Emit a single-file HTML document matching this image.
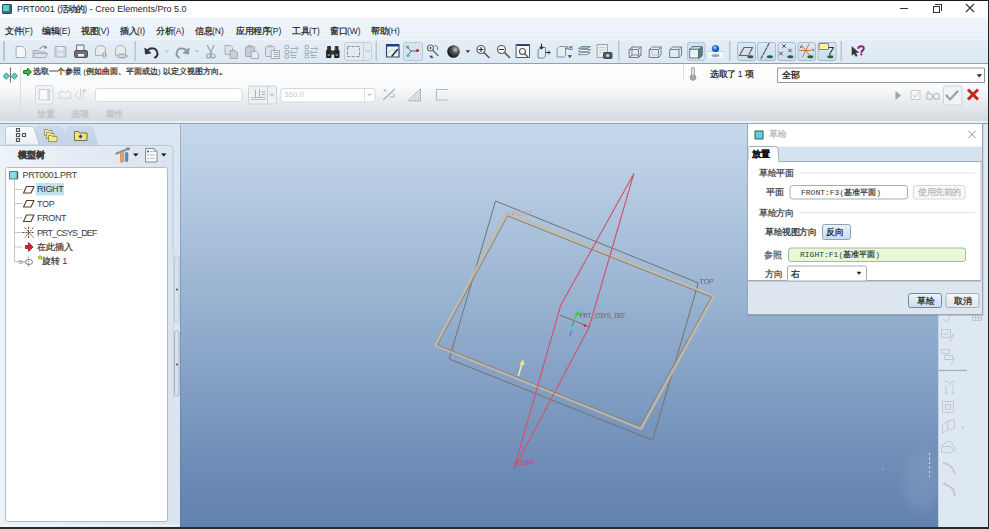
<!DOCTYPE html>
<html><head><meta charset="utf-8">
<style>
*{box-sizing:border-box;}
html,body{margin:0;padding:0;}
body{width:989px;height:529px;position:relative;overflow:hidden;background:#fff;font-family:"Liberation Sans",sans-serif;color:#222;}
.a{position:absolute;}
.t{position:absolute;white-space:nowrap;line-height:1;}
.ttl .z{width:8px !important;}
.z{display:inline-block;width:1em;font-style:normal;font-family:"Liberation Sans",sans-serif;text-align:center;letter-spacing:0;-webkit-text-stroke:0.25px currentColor;}
</style></head><body>

<!-- top border -->
<div class="a" style="left:0;top:0;width:989px;height:1px;background:#1a1a1a"></div>
<!-- title bar -->
<div class="a" style="left:0;top:1px;width:989px;height:16px;background:#ffffff"></div>
<div class="a" style="left:2px;top:4px;width:10px;height:10px;background:#4fd0d4;border:1px solid #3a4a52;border-radius:1px;box-shadow:inset -2px -2px 0 #3b6e74"></div>
<div class="t ttl" style="left:17px;top:5px;font-size:9px;color:#1e1e1e">PRT0001 (<i class="z">活</i><i class="z">动</i><i class="z">的</i>) - Creo Elements/Pro 5.0</div>
<!-- window controls -->
<div class="a" style="left:900px;top:8px;width:8px;height:1px;background:#333"></div>
<div class="a" style="left:933px;top:6px;width:7px;height:7px;border:1px solid #333"></div>
<div class="a" style="left:935px;top:4px;width:7px;height:7px;border-top:1px solid #333;border-right:1px solid #333"></div>
<svg class="a" style="left:965px;top:3px" width="10" height="10"><path d="M1 1L9 9M9 1L1 9" stroke="#333" stroke-width="1.1"/></svg>

<!-- menu bar -->
<div class="a" style="left:0;top:17px;width:989px;height:22px;background:linear-gradient(#f1f6fc,#e9f1f9)"></div>
<div id="menu" style="font-size:8.5px;color:#1e1e1e">
<div class="t" style="left:5px;top:27px"><i class="z">文</i><i class="z">件</i>(F)</div>
<div class="t" style="left:42px;top:27px"><i class="z">编</i><i class="z">辑</i>(E)</div>
<div class="t" style="left:81px;top:27px"><i class="z">视</i><i class="z">图</i>(V)</div>
<div class="t" style="left:120px;top:27px"><i class="z">插</i><i class="z">入</i>(I)</div>
<div class="t" style="left:156px;top:27px"><i class="z">分</i><i class="z">析</i>(A)</div>
<div class="t" style="left:195px;top:27px"><i class="z">信</i><i class="z">息</i>(N)</div>
<div class="t" style="left:236px;top:27px"><i class="z">应</i><i class="z">用</i><i class="z">程</i><i class="z">序</i>(P)</div>
<div class="t" style="left:292px;top:27px"><i class="z">工</i><i class="z">具</i>(T)</div>
<div class="t" style="left:330px;top:27px"><i class="z">窗</i><i class="z">口</i>(W)</div>
<div class="t" style="left:371px;top:27px"><i class="z">帮</i><i class="z">助</i>(H)</div>
</div>

<!-- toolbar -->
<div class="a" style="left:0;top:39px;width:988px;height:25px;background:linear-gradient(#e6eef7,#dce8f2);border-top:1px solid #f2f6fa;border-bottom:1.5px solid #90a0ac"></div>
<svg class="a" style="left:0;top:0" width="989" height="64" viewBox="0 0 989 64">
<g fill="none" stroke-linecap="round" stroke-linejoin="round">
<!-- separators -->
<rect x="3" y="41" width="2" height="20" fill="#b9c5d1" stroke="none"/>
<rect x="134.5" y="41" width="1.5" height="20" fill="#b9c5d1" stroke="none"/>
<rect x="375.5" y="41" width="1.5" height="20" fill="#b9c5d1" stroke="none"/>
<rect x="618" y="41" width="1.5" height="20" fill="#b9c5d1" stroke="none"/>
<rect x="729" y="41" width="1.5" height="20" fill="#b9c5d1" stroke="none"/>
<rect x="840.5" y="41" width="1.5" height="20" fill="#b9c5d1" stroke="none"/>
<!-- new -->
<path d="M16.5 46.5h6l3 3v8h-9z" fill="#f4f6f8" stroke="#a8b0b8"/>
<!-- open -->
<path d="M33.5 50.5h5l1 1.5h6v5.5h-12z" fill="#c9d0d6" stroke="#a7afb7"/>
<path d="M35 53.5h12.5l-2 4h-12z" fill="#dde2e6" stroke="#a7afb7"/>
<path d="M40 49c1-2.5 4-3.5 6-2" stroke="#9aa3ab" stroke-width="1.3"/>
<circle cx="45.5" cy="47.5" r="1.2" fill="#7d868e" stroke="none"/>
<!-- save -->
<rect x="55" y="46.5" width="11" height="10.5" rx="1" fill="#cdd3d8" stroke="#aab2ba"/>
<rect x="57.5" y="47" width="6" height="3.5" fill="#eef1f4" stroke="none"/>
<rect x="57.5" y="52.5" width="6" height="4" fill="#e2e6ea" stroke="none"/>
<!-- print -->
<rect x="77" y="45" width="7" height="6" fill="#f2f2f2" stroke="#676b6f"/>
<rect x="74.5" y="50.5" width="13" height="7" rx="1.5" fill="#6d7175" stroke="#4f5357"/>
<rect x="78" y="54" width="6" height="2.5" fill="#f5f5f5" stroke="none"/>
<rect x="76" y="54" width="1.5" height="1.5" fill="#d03a2a" stroke="none"/>
<!-- 2 gray -->
<path d="M95.5 55v-5c0-3 2-4.5 5-4.5s5 1.5 5 4.5v5z" fill="#e8ecef" stroke="#a8b0b8"/>
<ellipse cx="104.5" cy="55" rx="1.6" ry="2.8" fill="#d5dadf" stroke="#9aa2aa"/>
<path d="M115.5 55v-5c0-3 2-4.5 5-4.5s5 1.5 5 4.5v5z" fill="#e8ecef" stroke="#a8b0b8"/>
<ellipse cx="122" cy="56" rx="5" ry="2" fill="#cfd4d9" stroke="#9aa2aa"/>
<!-- undo -->
<path d="M147.5 50.5c3-3 8-3 9.5 1s-1 5.5-2 6" stroke="#2f3337" stroke-width="2"/>
<path d="M145 48.5l0.5 5.5 5-1z" fill="#2f3337" stroke="#2f3337"/>
<path d="M165 50.5l2 2 2-2z" fill="#b0b8c0" stroke="none"/>
<!-- redo -->
<path d="M186.5 50.5c-3-3-8-3-9.5 1s1 5.5 2 6" stroke="#8f979f" stroke-width="1.8"/>
<path d="M189 48.5l-0.5 5.5-5-1z" fill="#8f979f" stroke="#8f979f"/>
<path d="M195 50.5l2 2 2-2z" fill="#b0b8c0" stroke="none"/>
<!-- cut -->
<path d="M207.5 45.5l4 8M214 45.5l-4 8" stroke="#9aa2aa" stroke-width="1.2"/>
<circle cx="208.5" cy="56" r="2" stroke="#9aa2aa" stroke-width="1.2"/>
<circle cx="213" cy="56" r="2" stroke="#9aa2aa" stroke-width="1.2"/>
<!-- copy -->
<path d="M225.5 45.5h5l2 2v7h-7z" fill="#dfe3e7" stroke="#a4acb4"/>
<path d="M230.5 50.5h5l2 2v6h-7z" fill="#c9ced3" stroke="#a4acb4"/>
<!-- paste -->
<rect x="245.5" y="46.5" width="9" height="10" rx="1" fill="#c6ccd2" stroke="#a4acb4"/>
<rect x="248" y="45" width="4" height="2.5" fill="#b0b7be" stroke="none"/>
<path d="M251.5 51.5h5l2 2v5h-7z" fill="#e8ebee" stroke="#a4acb4"/>
<!-- paste special -->
<rect x="265.5" y="46.5" width="9" height="10" rx="1" fill="#dfe3e7" stroke="#a4acb4"/>
<rect x="268" y="45" width="4" height="2.5" fill="#b8bfc6" stroke="none"/>
<rect x="271.5" y="50.5" width="8" height="8" fill="#eceff2" stroke="#a4acb4"/>
<path d="M274 52.5h4M274 54.5h4M274 56.5h4" stroke="#a4acb4"/>
<!-- tree arrows x2 -->
<g stroke="#a6aeb6"><rect x="285.5" y="45.5" width="3" height="3"/><rect x="285.5" y="50.5" width="3" height="3"/><rect x="285.5" y="55" width="3" height="3"/><path d="M291 48.5h6M296 46.5l2 2-2 2M291 52.5h6M292 50.5l-2 2 2 2M291 55.5h5M291 57.5h5"/></g>
<g stroke="#a6aeb6"><rect x="305.5" y="45.5" width="3" height="3"/><rect x="305.5" y="50.5" width="3" height="3"/><rect x="305.5" y="55" width="3" height="3"/><path d="M311 48.5h6M316 46.5l2 2-2 2M311 52.5h6M312 50.5l-2 2 2 2M311 55.5h5M311 57.5h5"/></g>
<!-- binoculars -->
<path d="M327 50.5h4v7h-4zM335 50.5h4v7h-4z" fill="#222" stroke="#222"/>
<path d="M328 46.5h2.5v4h-2.5zM335.5 46.5h2.5v4h-2.5zM331 51h4v3h-4z" fill="#333" stroke="#333"/>
<path d="M328 55h1.5M336 55h1.5" stroke="#ddd"/>
<!-- select box button -->
<rect x="344.5" y="42.5" width="27" height="18" rx="2" fill="#e2eaf2" stroke="#c3ced9"/>
<path d="M363.5 43v17" stroke="#c3ced9"/>
<rect x="347.5" y="46.5" width="12" height="10" stroke="#8f979f" stroke-dasharray="2.5 2"/>
<path d="M366 50.5l1.5 1.5 1.5-1.5" stroke="#a0a8b0"/>
<!-- sketch view icon -->
<rect x="386.5" y="44.5" width="12.5" height="12.5" fill="#eef2f6" stroke="#33466e" stroke-width="1.2"/>
<rect x="386.5" y="44.5" width="12.5" height="2" fill="#1e3a88" stroke="none"/>
<path d="M388.5 52.5l3.5-3.5 2.5 1.5" stroke="#c0ccd4"/>
<path d="M397.5 49.5l-5.5 6.5" stroke="#26323e" stroke-width="1.6"/>
<!-- active spin center button -->
<rect x="403.5" y="42.5" width="19" height="18" rx="2" fill="#d4e4f2" stroke="#b4c8da"/>
<path d="M407.5 47.5l3.5 3.5l-3 4.5M411 51h6" stroke="#5b6b70"/>
<circle cx="407.5" cy="47" r="1.6" fill="#3cbf4a" stroke="none"/>
<circle cx="417.5" cy="50.5" r="1.6" fill="#c0202a" stroke="none"/>
<circle cx="408" cy="55.5" r="1.6" fill="#3ac4c4" stroke="none"/>
<!-- spin icon -->
<circle cx="430.5" cy="48" r="3" stroke="#6b7378" stroke-width="1.2"/>
<circle cx="430.5" cy="48" r="0.9" fill="#333" stroke="none"/>
<path d="M433 50.5l5 5" stroke="#6b7378" stroke-width="1.5"/>
<path d="M435 45.5c2 0 3.5 2 2.5 4M430 56c0 1.5 1.5 2.5 3 1.5" stroke="#4a5a8a"/>
<circle cx="431.5" cy="56.5" r="1.1" fill="#1d3a9a" stroke="none"/>
<!-- sphere -->
<defs><radialGradient id="sph" cx="0.65" cy="0.35" r="0.7"><stop offset="0" stop-color="#bfc3c7"/><stop offset="0.45" stop-color="#4c5054"/><stop offset="1" stop-color="#0f1113"/></radialGradient>
<radialGradient id="bsph" cx="0.4" cy="0.35" r="0.7"><stop offset="0" stop-color="#9fd0ff"/><stop offset="0.5" stop-color="#1e6fe0"/><stop offset="1" stop-color="#0a3a9a"/></radialGradient></defs>
<circle cx="453.5" cy="51.5" r="6.3" fill="url(#sph)" stroke="none"/>
<path d="M466.5 50.5h3l-1.5 2z" fill="#333" stroke="#333" stroke-width="0.6"/>
<!-- zoom in -->
<circle cx="481" cy="49.5" r="4" fill="#f6f6f6" stroke="#555a5e" stroke-width="1.2"/>
<path d="M479 49.5h4M481 47.5v4" stroke="#333" stroke-width="1.2"/>
<path d="M484 52.5l5 5" stroke="#555a5e" stroke-width="1.6"/>
<!-- zoom out -->
<circle cx="501.5" cy="49.5" r="4" fill="#f6f6f6" stroke="#555a5e" stroke-width="1.2"/>
<path d="M499.5 49.5h4" stroke="#333" stroke-width="1.2"/>
<path d="M504.5 52.5l5 5" stroke="#555a5e" stroke-width="1.6"/>
<!-- refit -->
<rect x="516.5" y="44.5" width="13" height="13" fill="#f5f7f9" stroke="#4a5866"/>
<rect x="516.5" y="44.5" width="13" height="1.5" fill="#22397a" stroke="none"/>
<circle cx="522.5" cy="51.5" r="3" stroke="#555" stroke-width="1.1"/>
<path d="M524.5 53.5l3 3" stroke="#555" stroke-width="1.3"/>
<!-- datum box arrow -->
<path d="M538.5 49.5l3-2h4v9l-2 1.5h-5z" fill="#dcf2ee" stroke="#7c858c"/>
<path d="M541.5 44v4.5M540 47l1.5 2 1.5-2" stroke="#2a2a2a" stroke-width="1.1"/>
<path d="M546 52.5h4M548.5 51l1.5 1.5-1.5 1.5" stroke="#2a2a2a"/>
<!-- box AB -->
<path d="M557.5 48.5l2-2h6v9l-2 1.5h-6z" fill="#e2f2f0" stroke="#8c959c"/>
<text x="565.5" y="50" font-size="5.5" fill="#444" font-family="Liberation Sans">AB</text>
<path d="M568.5 55.5h3l-1.5 2z" fill="#333" stroke="#333" stroke-width="0.5"/>
<!-- layers -->
<path d="M578.5 48.5l3-2h9l-3 2z" fill="#6fdcd4" stroke="#7e8a90"/>
<path d="M578.5 51.5l3-2h9l-3 2zM578.5 54.5l3-2h9l-3 2z" fill="#eef0f2" stroke="#8a9298"/>
<!-- sheet camera -->
<rect x="597.5" y="44.5" width="10" height="13" fill="#eceff1" stroke="#9aa1a8"/>
<path d="M599.5 47.5h6M599.5 50h6M599.5 52.5h6" stroke="#c6ccd1"/>
<rect x="603.5" y="52.5" width="8.5" height="6" rx="1" fill="#55595d" stroke="#44484c"/>
<circle cx="607.7" cy="55.5" r="1.6" fill="#cfd3d6" stroke="none"/>
<!-- boxes -->
<g stroke="#777e84" fill="none">
<path d="M629.5 49.5l2.5-2.5h9v8l-2.5 2.5h-9zM629.5 49.5h9v8M638.5 49.5l2.5-2.5"/><path d="M632 47v8l-2.5 2.5M632 55h9" stroke-dasharray="1 1"/>
<path d="M649.5 49.5l2.5-2.5h9v8l-2.5 2.5h-9zM649.5 49.5h9v8M658.5 49.5l2.5-2.5"/><path d="M652 47v8h9" stroke="#c0c6cb"/>
<path d="M670 49.5l2.5-2.5h9v8l-2.5 2.5h-9zM670 49.5h9v8M679 49.5l2.5-2.5"/>
</g>
<!-- shaded active -->
<rect x="687.5" y="42.5" width="17.5" height="18" rx="2" fill="#d0e0ef" stroke="#b3c5d6"/>
<path d="M690 49l3-2.5h9v9l-3 2.5h-9z" fill="#e9f4f4" stroke="#6f7b80"/>
<path d="M690 49h9v9" stroke="#6f7b80"/><path d="M699 49l3-2.5v9l-3 2.5z" fill="#4a8a8a" stroke="#556"/>
<path d="M690 49l3-2.5h9l-3 2.5z" fill="#9ee6e0" stroke="#6f7b80"/>
<!-- blue pin -->
<rect x="708" y="52" width="15" height="6" fill="#f4f8fc" stroke="none"/>
<path d="M708 51.5h15" stroke="#c9d3dc"/>
<ellipse cx="715.5" cy="55.5" rx="4" ry="1.5" fill="#8fa4c0" stroke="none"/>
<circle cx="715.5" cy="48.5" r="3.6" fill="url(#bsph)" stroke="none"/>
<!-- datum buttons -->
<defs><linearGradient id="dbtn" x1="0" y1="0" x2="0" y2="1"><stop offset="0" stop-color="#dde9f5"/><stop offset="1" stop-color="#cadcee"/></linearGradient></defs>
<g fill="url(#dbtn)" stroke="#a9bccd">
<rect x="737.5" y="42.5" width="18" height="18" rx="2"/>
<rect x="757.5" y="42.5" width="18" height="18" rx="2"/>
<rect x="778" y="42.5" width="17.5" height="18" rx="2"/>
<rect x="798" y="42.5" width="17.5" height="18" rx="2"/>
<rect x="818" y="42.5" width="18" height="18" rx="2"/>
</g>
<g stroke="#d8ecec" stroke-width="0.8" fill="#1f5e48">
<ellipse cx="750.5" cy="56.8" rx="3.6" ry="2"/><ellipse cx="770" cy="56.8" rx="3.6" ry="2"/><ellipse cx="790.5" cy="56.8" rx="3.6" ry="2"/><ellipse cx="810.5" cy="56.8" rx="3.6" ry="2"/><ellipse cx="830.5" cy="56.8" rx="3.6" ry="2"/>
</g>
<path d="M748 55.5h-8.5l4.5-8h8.5l-3.5 7" stroke="#7a5a50" stroke-width="1.2"/>
<path d="M761 58.5l8-15" stroke="#6a5e5e" stroke-width="1.3" stroke-dasharray="3 1.6"/>
<path d="M782.5 44.5l3 3M785.5 44.5l-3 3M779.5 52l3 3M782.5 52l-3 3M788.5 49l3 3M791.5 49l-3 3" stroke="#5a4a48" stroke-width="1"/>
<path d="M801.5 45l8.5 11M809 44l-6.5 13M799.5 50.5h11" stroke="#c8743a" stroke-width="1"/>
<path d="M800 46l2 2M802 46l-2 2M812 49l2 2M814 49l-2 2" stroke="#6a6a80" stroke-width="0.8"/>
<rect x="819.5" y="43.5" width="9" height="6" fill="#f8f2a6" stroke="#8a8a70"/>
<path d="M829 47.5h4.5l-4 7" stroke="#333" stroke-width="1.1"/>
<!-- help -->
<path d="M852 47v8.3l2.1-1.9 1.8 3 1.3-.8-1.8-3 2.9-.2z" fill="#2a3036" stroke="#2a3036" stroke-width="0.6"/>
<path d="M858.2 48.8c0-1.7 1.3-2.5 2.8-2.5s2.8 .9 2.8 2.3c0 1.8-2 2-2.4 3.5v.6" stroke="#8a2a80" stroke-width="2" stroke-linecap="butt"/><circle cx="861.3" cy="54.4" r="1.15" fill="#8a2a80"/>
</g>
</svg>


<!-- dashboard -->
<div class="a" style="left:0;top:64px;width:988px;height:57px;background:linear-gradient(#ffffff 0%,#f9fafb 40%,#e8ebee 68%,#d5dbe1 100%)"></div>
<div class="a" style="left:0;top:121px;width:988px;height:2px;background:#e6f0f6"></div>
<div class="a" style="left:0;top:122.5px;width:988px;height:1.5px;background:#8ea2b2"></div>
<div class="a" style="left:20px;top:65px;width:1px;height:54px;background:#d8dde2"></div>
<svg class="a" style="left:0;top:62px" width="989" height="60" viewBox="0 62 989 60">
<g fill="none" stroke-linecap="round" stroke-linejoin="round">
<!-- left icon -->
<path d="M10.5 68v14" stroke="#555" stroke-dasharray="1.5 1.2"/>
<path d="M3.5 76l3-3 3 3-3 3z" fill="#5fc9c4" stroke="#3a8a88"/>
<path d="M11.5 76l3-3 3 3-3 3z" fill="#5fc9c4" stroke="#3a8a88"/>
<!-- green arrow -->
<path d="M24 70.5h3.5v-2.5l4 4-4 4v-2.5h-3.5z" fill="#32c040" stroke="#1e5a20" stroke-width="0.9"/>
<!-- placement button -->
<rect x="35.5" y="85.5" width="17.5" height="18.5" rx="2" fill="#f3f4f5" stroke="#d2d6da"/>
<rect x="39.5" y="89.5" width="10" height="10.5" fill="#fafafa" stroke="#c6cacd"/>
<path d="M48 90v10" stroke="#d0d4d7" stroke-width="1.5"/>
<path d="M59.5 92.5c2-1.5 4-1.5 5.5 0c2-1.5 4-1.5 5.5 0v6.5c-2-1.5-3.5-1.5-5.5 0c-2-1.5-3.5-1.5-5.5 0z" stroke="#d0d4d7"/>
<path d="M78 91.5c-2 1-3 3-2 5s4 3 6 1.5 2-4 0-5.5" stroke="#cfd3d6"/>
<path d="M80.5 89v8" stroke="#c6cacd" stroke-dasharray="1 1"/>
<path d="M83 90.5l2-1v2z" fill="#c6cacd" stroke="#c6cacd"/>
<!-- long input -->
<rect x="95.5" y="88.5" width="146.5" height="13" rx="2.5" fill="#fff" stroke="#d8dcdf"/>
<!-- thickness button -->
<rect x="248.5" y="86" width="28" height="18" rx="1.5" fill="#eef0f2" stroke="#cdd2d6"/>
<path d="M267.5 86.5v17" stroke="#cdd2d6"/>
<path d="M251 99.5h14M251 97.5h14" stroke="#b8bec3"/>
<path d="M255.5 90v7.5M259.5 90v7.5M262 92h3M262 94.5h3" stroke="#a8aeb3"/>
<path d="M270.5 94l1.5 1.5 1.5-1.5" stroke="#9aa0a5"/>
<!-- 360 input -->
<rect x="281" y="88.5" width="94" height="13.5" rx="2" fill="#fff" stroke="#d4d8dc"/>
<path d="M364.5 89v13" stroke="#dde0e3"/>
<path d="M368 94l1.5 1.5 1.5-1.5" stroke="#a0a6ab"/>
<!-- flip -->
<path d="M383.5 99.5l11-10" stroke="#a9aeb3" stroke-width="1.2"/>
<path d="M384 89.5l2 2M386 89.5l-2 2M390 97h4v-3" stroke="#a9aeb3"/>
<!-- hatched -->
<path d="M408.5 100.5l12-12v12z" stroke="#aeb3b8" fill="#e6e8ea"/>
<path d="M412 100l8-8M415 100l5-5M418 100l2-2" stroke="#c2c6ca"/>
<!-- bracket -->
<path d="M447.5 89.5h-11v10.5h11" stroke="#b5babe" stroke-width="1.1"/>
<!-- right section -->
<path d="M683.5 64.5v16" stroke="#dde1e4"/>
<circle cx="693" cy="77.5" r="2.8" fill="#a4a9ad" stroke="#8e9397"/>
<rect x="691.5" y="67.5" width="3" height="8" rx="1.5" fill="#e4e6e8" stroke="#9da2a6"/>
<rect x="778" y="68" width="206.5" height="14.5" fill="#fff" stroke="#8f969c"/>
<path d="M977.5 74.5h4l-2 2.5z" fill="#222" stroke="#222" stroke-width="0.6"/>
<path d="M895.5 91v9l5.5-4.5z" fill="#9fa4a8" stroke="none"/>
<rect x="911.5" y="90.5" width="8.5" height="9" fill="#f6f7f8" stroke="#c8ccd0"/>
<path d="M913 95l2 2 3.5-4.5" stroke="#c0c4c8"/>
<circle cx="929.5" cy="96.5" r="3" stroke="#b6bbbf" stroke-width="1.1"/>
<circle cx="936.5" cy="96.5" r="3" stroke="#b6bbbf" stroke-width="1.1"/>
<path d="M926.5 93l3-1.5" stroke="#b6bbbf"/>
<rect x="943.5" y="86" width="18.5" height="19" rx="2" fill="#f2f3f4" stroke="#cfd3d6"/>
<path d="M946.5 95.5l3.5 4 7.5-8" stroke="#9ba0a4" stroke-width="2.2"/>
<path d="M968 89.5l10 10M978 89.5l-10 10" stroke="#c8281c" stroke-width="3" stroke-linecap="butt"/>
</g>
</svg>
<div style="font-size:8px;color:#2a2a2a">
<div class="t" style="left:33px;top:68px"><i class="z">选</i><i class="z">取</i><i class="z">一</i><i class="z">个</i><i class="z">参</i><i class="z">照</i> (<i class="z">例</i><i class="z">如</i><i class="z">曲</i><i class="z">面</i><i class="z">、</i><i class="z">平</i><i class="z">面</i><i class="z">或</i><i class="z">边</i>) <i class="z">以</i><i class="z">定</i><i class="z">义</i><i class="z">视</i><i class="z">图</i><i class="z">方</i><i class="z">向</i><i class="z">。</i></div>
</div>
<div style="font-size:8.5px;color:#bfc3c7">
<div class="t" style="left:37px;top:110px"><i class="z">放</i><i class="z">置</i></div>
<div class="t" style="left:71px;top:110px"><i class="z">选</i><i class="z">项</i></div>
<div class="t" style="left:105px;top:110px"><i class="z">属</i><i class="z">性</i></div>
<div class="t" style="left:284px;top:91px;font-size:8px;color:#c6cacd">360.0</div>
</div>
<div class="t" style="left:710px;top:70px;font-size:8.5px;color:#222"><i class="z">选</i><i class="z">取</i><i class="z">了</i> 1 <i class="z">项</i></div>
<div class="t" style="left:782px;top:70.5px;font-size:8.5px;color:#111"><i class="z">全</i><i class="z">部</i></div>


<!-- left panel -->
<div class="a" style="left:0;top:124px;width:181px;height:403px;background:#d9e5f1"></div>
<svg class="a" style="left:0;top:120px" width="182" height="407" viewBox="0 120 182 407">
<defs>
<linearGradient id="tabA" x1="0" y1="0" x2="0" y2="1"><stop offset="0" stop-color="#fbfcfd"/><stop offset="1" stop-color="#e9eff5"/></linearGradient>
<linearGradient id="tabB" x1="0" y1="0" x2="0" y2="1"><stop offset="0" stop-color="#cbdaea"/><stop offset="1" stop-color="#c2d3e5"/></linearGradient>
<linearGradient id="hdr" x1="0" y1="0" x2="1" y2="0"><stop offset="0" stop-color="#f2f6fa"/><stop offset="1" stop-color="#d9e5f0"/></linearGradient>
<linearGradient id="hdrv" x1="0" y1="0" x2="1" y2="0"><stop offset="0" stop-color="#eef3f8"/><stop offset="1" stop-color="#dae4ee"/></linearGradient>
</defs>
<g stroke-linejoin="round">
<!-- tabs -->
<path d="M66 144.5v-15c0-2 1-3 3-3h20c2 0 3 1 4 3l5 15z" fill="url(#tabB)" stroke="#c7d5e3"/>
<path d="M36 144.5v-15c0-2 1-3 3-3h20c2 0 3 1 4 3l5 15z" fill="url(#tabB)" stroke="#c7d5e3"/>
<path d="M5.5 145v-15.5c0-2 1-3 3-3h22c2 0 3 1 4 3l5 15.5z" fill="url(#tabA)" stroke="#b9c9d8"/>
<!-- panel box -->
<path d="M0 145h170a3 3 0 0 1 3 3v379h-173z" fill="url(#hdrv)" stroke="none"/>
<path d="M0 145.5h170a3 3 0 0 1 3 3v100" fill="none" stroke="#bccad7"/>
<path d="M173.5 248v150" stroke="#c8d4e0"/>
<rect x="5.5" y="167.5" width="162" height="354" rx="2" fill="#fff" stroke="#b4bcc4"/>
<!-- sash handles -->
<rect x="174.5" y="256" width="4.5" height="66" rx="2" fill="#d6e2ee" stroke="#bfcad5"/>
<rect x="174.5" y="331" width="4.5" height="65" rx="2" fill="#d6e2ee" stroke="#a9b5c0"/>
<circle cx="177" cy="289.5" r="0.9" fill="#333"/>
<circle cx="177" cy="364.5" r="0.9" fill="#333"/>
<path d="M0 525.5h180" stroke="#f4f8fb"/>
<!-- tab icons -->
<g fill="#f4f6f8" stroke="#4e5256" stroke-width="1.2">
<rect x="16.5" y="128.5" width="3" height="3"/><rect x="16.5" y="133.5" width="3" height="3"/><rect x="16.5" y="138.5" width="3" height="3"/><rect x="22.5" y="133.5" width="3" height="3"/>
</g>
<path d="M44.5 129.5h3l1 1h3.5v5h-7.5z" fill="#f2eaa0" stroke="#8a8460" stroke-width="0.8"/>
<path d="M46.5 132.5h3l1 1h3.5v5h-7.5z" fill="#f2e890" stroke="#8a8460" stroke-width="0.8"/>
<path d="M48.5 135.5h3l1 1h4.5v5h-8.5z" fill="#f4ea80" stroke="#8a8460" stroke-width="0.8"/>
<path d="M74.5 131.5h4l1 1.5h7.5v7.5h-12.5z" fill="#f2e47a" stroke="#7a7040"/>
<path d="M80.5 134.5l2 2-2 2-2-2z" fill="#2a3a8a"/>
<!-- header icons -->
<path d="M116.5 153.5l9-3.5 3.5-1.5" stroke="#8a9298" stroke-width="2.2" fill="none" stroke-linecap="round"/>
<path d="M126.5 147.5l3 2.5" stroke="#7a8288" stroke-width="1.2" fill="none"/>
<rect x="120.5" y="151.5" width="3" height="11" rx="1.4" fill="#e6a060" stroke="#b87838" stroke-width="0.5"/>
<rect x="125.3" y="152.5" width="2.6" height="9" rx="0.8" fill="#5d8cc4" stroke="#3a6494" stroke-width="0.5"/>
<path d="M133 153.5h5.5l-2.75 3z" fill="#111"/>
<path d="M145.5 148.5h8.5l3 3v10.5h-11.5z" fill="#fafbfc" stroke="#777d82" stroke-width="0.9"/>
<path d="M154 148.5v3h3" fill="none" stroke="#8a9095" stroke-width="0.7"/>
<circle cx="148" cy="151.5" r="0.9" fill="#333"/><circle cx="148" cy="155" r="0.8" fill="#999"/><circle cx="148" cy="158.5" r="0.8" fill="#999"/>
<path d="M150 151.5h3M150 155h5M150 158.5h5" stroke="#9aa0a5" stroke-width="0.7"/>
<path d="M161 153.5h5.5l-2.75 3z" fill="#111"/>
<!-- tree lines -->
<g stroke="#c4c8cc" fill="none">
<path d="M14.5 180v82"/><path d="M14.5 189.5h8M14.5 203.5h8M14.5 218h8M14.5 232.5h8M14.5 247h8M14.5 261.5h8"/>
</g>
<!-- root icon -->
<rect x="9.5" y="171.5" width="8" height="7.5" fill="#7fe0e6" stroke="#5a7880"/><path d="M17.5 172v7" stroke="#3e5a60" stroke-width="1.5"/>
<!-- highlight -->
<rect x="36" y="183" width="28" height="12.5" fill="#bfe4ee"/>
<!-- plane icons -->
<g fill="none" stroke="#5a3a2a" stroke-width="1.1">
<path d="M23.5 193l3-6.5h7.5l-3 6.5z"/>
<path d="M23.5 207l3-6.5h7.5l-3 6.5z"/>
<path d="M23.5 221.5l3-6.5h7.5l-3 6.5z"/>
</g>
<!-- csys -->
<g stroke="#6a4a3a" stroke-width="1" fill="none">
<path d="M24.5 227.5l9 10M33.5 227.5l-8.5 10M22.5 232.5h11M28.5 227v11" stroke-dasharray="2 1"/>
</g>
<!-- red arrow -->
<path d="M25.5 245.5h3v-3l4.5 4.5-4.5 4.5v-3h-3z" fill="#d8202a" stroke="#7a1010" stroke-width="0.7"/>
<!-- revolve -->
<circle cx="20.5" cy="262" r="1.6" fill="none" stroke="#8a9298" stroke-width="0.9"/>
<ellipse cx="29" cy="262" rx="3.5" ry="2.6" fill="none" stroke="#7a8288" stroke-width="1"/>
<path d="M22 262h3" stroke="#8a9298" stroke-width="0.9"/>
<path d="M28.5 256.5v11" stroke="#7a8288" stroke-width="0.9" stroke-dasharray="1.2 1"/>
<rect x="38.5" y="256" width="3" height="3" fill="#e6e040" stroke="#8a8a30" stroke-width="0.6"/>
</g>
</svg>
<div class="t" style="left:18px;top:151px;font-size:9px;font-weight:bold;color:#3a3a3a"><i class="z">模</i><i class="z">型</i><i class="z">树</i></div>
<div style="font-size:9px;color:#3c3c3c;letter-spacing:-0.35px">
<div class="t" style="left:22.5px;top:170.5px">PRT0001.PRT</div>
<div class="t" style="left:37px;top:185px;color:#24343e;letter-spacing:-0.3px">RIGHT</div>
<div class="t" style="left:37px;top:199.5px">TOP</div>
<div class="t" style="left:37px;top:214px">FRONT</div>
<div class="t" style="left:37px;top:228.5px;letter-spacing:-0.9px">PRT_CSYS_DEF</div>
<div class="t" style="left:37px;top:242.5px"><i class="z">在</i><i class="z">此</i><i class="z">插</i><i class="z">入</i></div>
<div class="t" style="left:42px;top:257px"><i class="z">旋</i><i class="z">转</i> 1</div>
</div>

<!-- viewport -->
<div class="a" style="left:180px;top:124px;width:758px;height:403px;background:linear-gradient(#c6d9eb 0%,#97b1d0 45%,#6b8ab5 87%,#6282b0 100%);border-left:1px solid rgba(90,110,150,0.35)"></div>
<svg class="a" style="left:181px;top:124px" width="757" height="403" viewBox="181 124 757 403">
<defs><filter id="soft" x="-5%" y="-5%" width="110%" height="110%"><feGaussianBlur stdDeviation="0.35"/></filter></defs>
<g fill="none" stroke-linejoin="round" filter="url(#soft)">
<!-- TOP plane thin -->
<path d="M495.5 201L698.3 282.9L652.6 440.3L449.2 359Z" stroke="#76706c" stroke-width="1"/>
<!-- FRONT plane thick -->
<path d="M506.3 213.2L713.4 296.3L641 428.6L435.5 345.3Z" stroke="#c6bba2" stroke-width="2.7" opacity="0.85"/>
<path d="M507.6 216L711.5 297L639.8 426.6L437.3 345Z" stroke="#8a7e78" stroke-width="1"/>
<!-- RIGHT plane red -->
<path d="M633.8 173.7L560.5 305.8L514.2 468.4L589 327.6Z" stroke="#d8607a" stroke-width="1.1"/>
<path d="M633.8 173.7L560.5 305.8L514.2 468.4L589 327.6Z" stroke="#b03a58" stroke-width="1" stroke-dasharray="1.5 1.5" opacity="0.7"/>
<!-- csys -->
<path d="M559.8 315L589.5 327" stroke="#7a6a70" stroke-width="1"/>
<circle cx="585" cy="325.6" r="1.4" fill="#e02040"/>
<path d="M573.7 321L577.7 312" stroke="#40d040" stroke-width="1.2"/>
<path d="M576 314.5l2.5-3.5 1 4z" fill="#40e040" stroke="#30c030" stroke-width="0.8"/>
<path d="M573.7 321L570 336" stroke="#4a6a80" stroke-width="0.8"/>
<path d="M571 330l1.5-4 1.5 3z" fill="#40e0e0" stroke="#40d0d0" stroke-width="1"/>
<!-- yellow arrow -->
<path d="M518.3 376L522.5 362" stroke="#f2f290" stroke-width="1.5"/>
<path d="M520 364l3-4 1 5z" fill="#f0f080" stroke="#e8e870" stroke-width="0.8"/>
<!-- labels -->
<text x="507" y="215.5" font-size="7" fill="#eaa040" font-family="Liberation Sans" letter-spacing="0.3">FRONT</text>
<text x="699.5" y="283.5" font-size="7" fill="#66666a" font-family="Liberation Sans">TOP</text>
<text x="579.5" y="318" font-size="7.5" fill="#666c72" font-family="Liberation Mono" letter-spacing="-0.65">PRT_CSYS_DEF</text>
<text x="515" y="465" font-size="6.5" fill="#e04060" font-family="Liberation Mono">RIGHT</text>
<!-- white ticks -->
<radialGradient id="haze"><stop offset="0" stop-color="#fff" stop-opacity="0.09"/><stop offset="0.6" stop-color="#fff" stop-opacity="0.06"/><stop offset="1" stop-color="#fff" stop-opacity="0"/></radialGradient>
<ellipse cx="922" cy="482" rx="24" ry="38" fill="url(#haze)" stroke="none"/>
<path d="M929.5 453v24" stroke="#e6ecf4" stroke-width="0.9" stroke-dasharray="2 2.5"/>
<circle cx="883" cy="469" r="0.6" fill="#e8eef6" stroke="none"/>
</g>
</svg>
<!-- right strip -->
<div class="a" style="left:938px;top:124px;width:50px;height:403px;background:#dde8f2;border-left:1px solid #c6d4e2"></div>
<svg class="a" style="left:938px;top:300px" width="50" height="227" viewBox="938 300 50 227">
<g fill="none" stroke="#c2c8ce" stroke-linejoin="round" stroke-width="1">
<path d="M943 319l3 3M951 314l-4 9" />
<rect x="972.5" y="314.5" width="9" height="6"/><path d="M975.5 314.5v6M978.5 314.5v6M972.5 317.5h9"/>
<rect x="941.5" y="329.5" width="9" height="8"/><path d="M943.5 333l2 2 3-3M951 337l3-3M954 334l-4 8"/>
<rect x="941.5" y="349.5" width="8" height="4"/><rect x="944.5" y="355.5" width="8" height="4"/><path d="M953 360l2-2M955 358l-4 7"/>
<path d="M938.5 370.5h28.5" stroke="#a8b0b8" stroke-width="1.3"/>
<path d="M944.5 381.5h3l1.5 3h1l1.5-3h3M946 385v8M953 385v8M944.5 393h3M951.5 393h3"/>
<rect x="942.5" y="401.5" width="11" height="11"/><rect x="945.5" y="404.5" width="5" height="5"/>
<path d="M942.5 425l5-4v9l-5 3zM947.5 421l7-1v8l-7 2"/><path d="M962 426.5l1.5 1-1.5 1z" fill="#b2b8be"/>
<path d="M941.5 446.5l5-5h4l5 7-4 4h-10z M941.5 446.5h9l5 6"/>
<path d="M943 463c5 0 10 4 12 11" stroke-width="2"/>
<path d="M943 483l4 2 6 4 2 7" stroke-width="2"/>
</g>
</svg>


<!-- right border & bottom -->
<div class="a" style="left:988px;top:0;width:1px;height:529px;background:#222"></div>
<div class="a" style="left:0;top:527px;width:989px;height:2px;background:#2b2b2b"></div>

<!-- dialog -->
<svg class="a" style="left:744px;top:120px" width="245" height="200" viewBox="744 120 245 200">
<defs>
<linearGradient id="btn" x1="0" y1="0" x2="0" y2="1"><stop offset="0" stop-color="#f6f8fa"/><stop offset="1" stop-color="#dfe5eb"/></linearGradient>
<linearGradient id="btnA" x1="0" y1="0" x2="0" y2="1"><stop offset="0" stop-color="#e9f3fb"/><stop offset="1" stop-color="#c8dcee"/></linearGradient>
</defs>
<rect x="747" y="123" width="236.5" height="193" fill="rgba(60,80,100,0.22)"/>
<rect x="747.5" y="123.5" width="235" height="191" fill="#ffffff" stroke="#9aa8b6"/>
<!-- tab strip -->
<rect x="748" y="146.5" width="234" height="15" fill="#d6e3ef"/>
<path d="M748 161.5h234" stroke="#9fb0c0"/>
<path d="M748 161.5v-13c0-1 1-2 2-2h25.5c1 0 2 1 2.5 2.5l1 12.5" fill="#fff" stroke="#9fb0c0"/>
<rect x="748.5" y="160" width="29.5" height="3" fill="#fff"/>
<!-- content -->
<rect x="748" y="162" width="233" height="118.5" fill="#fff"/>
<rect x="748" y="281" width="234" height="33" fill="#dde6ef"/>
<path d="M748 280.8h233" stroke="#a2acb6" stroke-width="1.4"/><path d="M981 161.5v119" stroke="#a9b6c2"/>
<!-- icon + close -->
<rect x="755" y="131" width="8" height="8" fill="#5ed0d6" stroke="#3c5860"/>
<path d="M968.5 131l7 7M975.5 131l-7 7" stroke="#8c9094" stroke-width="1"/>
<!-- group lines -->
<path d="M800 173h175M800 212.5h175" stroke="#dde2e7"/>
<!-- inputs -->
<rect x="790" y="185.5" width="117.5" height="13.5" rx="2.5" fill="#fff" stroke="#a4aeb8"/>
<rect x="913.5" y="185.5" width="51.5" height="13.5" rx="2" fill="#fbfbfb" stroke="#d4d8dc"/>
<rect x="822.5" y="224.5" width="28" height="15" rx="2" fill="url(#btnA)" stroke="#8fa4b8"/>
<rect x="788.5" y="248" width="177" height="13.5" rx="2.5" fill="#e6f8d6" stroke="#a8b6a4"/>
<rect x="787.5" y="266" width="79" height="15" rx="1.5" fill="#fff" stroke="#a4aeb8"/>
<path d="M857 272h4l-2 2.5z" fill="#222" stroke="#222" stroke-width="0.5"/>
<rect x="908.5" y="293.5" width="33" height="14" rx="2" fill="url(#btnA)" stroke="#6f8aa4"/>
<rect x="946" y="293.5" width="33" height="14" rx="2" fill="url(#btn)" stroke="#a4b0bc"/>
</svg>
<div style="font-size:8.5px;color:#333">
<div class="t" style="left:769px;top:130px;color:#b4b8bc"><i class="z">草</i><i class="z">绘</i></div>
<div class="t" style="left:752px;top:150px;font-weight:bold;color:#111"><i class="z">放</i><i class="z">置</i></div>
<div class="t" style="left:759px;top:168.5px;color:#444"><i class="z">草</i><i class="z">绘</i><i class="z">平</i><i class="z">面</i></div>
<div class="t" style="left:766px;top:188px;color:#444"><i class="z">平</i><i class="z">面</i></div>
<div class="t" style="left:801px;top:188.5px;font-family:'Liberation Mono',monospace;font-size:8px;color:#333">FRONT:F3(<i class="z">基</i><i class="z">准</i><i class="z">平</i><i class="z">面</i>)</div>
<div class="t" style="left:918px;top:188px;color:#b4b8bc"><i class="z">使</i><i class="z">用</i><i class="z">先</i><i class="z">前</i><i class="z">的</i></div>
<div class="t" style="left:759px;top:208.5px;color:#444"><i class="z">草</i><i class="z">绘</i><i class="z">方</i><i class="z">向</i></div>
<div class="t" style="left:765px;top:227.5px;color:#333"><i class="z">草</i><i class="z">绘</i><i class="z">视</i><i class="z">图</i><i class="z">方</i><i class="z">向</i></div>
<div class="t" style="left:826px;top:227.5px;color:#222"><i class="z">反</i><i class="z">向</i></div>
<div class="t" style="left:764px;top:250.5px;color:#555"><i class="z">参</i><i class="z">照</i></div>
<div class="t" style="left:800px;top:251px;font-family:'Liberation Mono',monospace;font-size:8px;color:#333">RIGHT:F1(<i class="z">基</i><i class="z">准</i><i class="z">平</i><i class="z">面</i>)</div>
<div class="t" style="left:765px;top:269.5px;color:#444"><i class="z">方</i><i class="z">向</i></div>
<div class="t" style="left:791px;top:269.5px;color:#222"><i class="z">右</i></div>
<div class="t" style="left:917px;top:296.5px;color:#222"><i class="z">草</i><i class="z">绘</i></div>
<div class="t" style="left:954px;top:296.5px;color:#222"><i class="z">取</i><i class="z">消</i></div>
</div>

</body></html>
